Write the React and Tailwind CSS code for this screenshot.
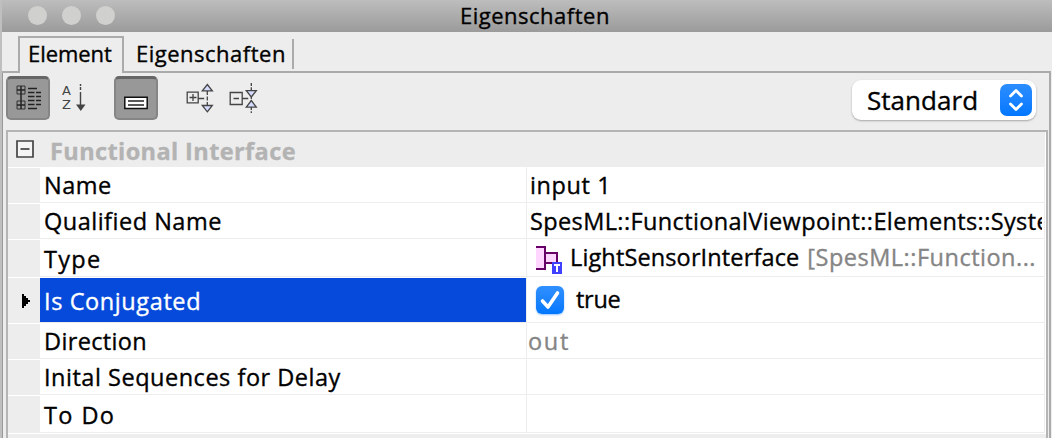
import React from "react";

const rows = [
  { name: "Name", h: "h-[36px]", pad: "pt-[5px]", track: "tracking-[0.5px]", value: "name" },
  { name: "Qualified Name", h: "h-[36px]", pad: "pt-[5px]", track: "tracking-[0.5px]", value: "qualified" },
  { name: "Type", h: "h-[38px]", pad: "pt-[7px]", track: "tracking-[1.3px]", value: "type" },
  { name: "Is Conjugated", h: "h-[46px]", pad: "pt-[11px]", track: "tracking-[0.6px]", value: "conjugated", selected: true },
  { name: "Direction", h: "h-[36px]", pad: "pt-[5px]", track: "tracking-[0.35px]", value: "direction" },
  { name: "Inital Sequences for Delay", h: "h-[36px]", pad: "pt-[5px]", track: "tracking-[0.52px]" },
  { name: "To Do", h: "h-[38px]", pad: "pt-[7px]", track: "tracking-[1.4px]" },
];

function TypeIcon() {
  return (
    <svg className="block h-[30px] w-[28px] shrink-0" viewBox="536 245 28 30">
      <path d="M536 247h9v22h-9z" fill="#ffd6ff" />
      <path d="M546 253h11v10h-11z" fill="#ffd6ff" />
      <path d="M536 247h9v22h-9M545 253h12v10h-12" fill="none" stroke="#660066" strokeWidth="2" />
      <path d="M552 262h10v12h-10z" fill="#4040ff" />
      <path d="M554 265h6M557 265v7" stroke="#fff" strokeWidth="2" fill="none" />
    </svg>
  );
}

function Value({ kind }) {
  if (kind === "name") return <div className="pl-[3px] pt-[5px] tracking-[0.6px]">input 1</div>;
  if (kind === "qualified")
    return <div className="w-[515px] overflow-hidden pl-[3px] pt-[5px] pb-1 tracking-[0.38px]">SpesML::FunctionalViewpoint::Elements::System</div>;
  if (kind === "type")
    return (
      <div className="flex pl-[9px] pt-[5px]">
        <TypeIcon />
        <span className="ml-[6px] tracking-[0.13px]">LightSensorInterface</span>
        <span className="ml-[8px] tracking-[0.5px] text-[#858585]">[SpesML::Function...</span>
      </div>
    );
  if (kind === "conjugated")
    return (
      <div className="flex pl-[9px] pt-[8px]">
        <span className="flex h-7 w-7 items-center justify-center rounded-[6px] bg-linear-to-b from-[#2f90ff] to-[#0077ff] shadow-[0_1px_2px_rgba(0,110,255,0.4)]">
          <svg className="h-7 w-7" viewBox="0 0 28 28">
            <path d="M6.5 15l5.5 6L21.5 7" fill="none" stroke="#fff" strokeWidth="3.6" strokeLinecap="round" strokeLinejoin="round" />
          </svg>
        </span>
        <span className="ml-[12px] pt-px tracking-[-0.3px]">true</span>
      </div>
    );
  if (kind === "direction") return <div className="pl-px pt-[5px] tracking-[1.7px] text-[#858585]">out</div>;
  return null;
}

function Row({ row }) {
  return (
    <div className={`flex shrink-0 ${row.h}`}>
      <div className="flex w-8 items-center border-t border-white bg-[#ededed] pl-[14px]">
        {row.selected && (
          <svg className="h-[14px] w-[8px]" viewBox="0 0 8 14">
            <path d="M0 0h2v2h2v2h2v2h2v2H6v2H4v2H2v2H0z" fill="#000" />
          </svg>
        )}
      </div>
      <div className="flex w-[486px] border-b border-t border-b-[#ededed] border-t-white bg-white">
        <div className={`w-full whitespace-nowrap pl-[4px] ${row.pad} ${row.track} ${row.selected ? "bg-[#064adb] text-white" : ""}`}>{row.name}</div>
      </div>
      <div className="w-[519px] whitespace-nowrap border-b border-l border-r border-t border-[#ededed] border-t-white bg-white">
        <Value kind={row.value} />
      </div>
      <div className="w-px bg-white" />
    </div>
  );
}

function ToolButton({ children }) {
  return (
    <div className="h-11 w-11 rounded-[5px] border-2 border-t-[3px] border-[#858585] border-t-[#666666] bg-[#989898]">
      <div className="-ml-[2px] -mt-[3px]">{children}</div>
    </div>
  );
}

function Toolbar() {
  return (
    <div className="flex h-[57px] shrink-0 pl-1 pt-[3px]">
      <ToolButton>
        <svg className="h-11 w-11" viewBox="6 76 44 44" fill="none" stroke="#222">
          <path d="M17 86h8v8h-8zM17 101h8v8h-8z" stroke="#333" />
          <path d="M21 86v23M17 90h8M17 105h8" strokeWidth="1.5" />
          <path d="M28 88.5h9M28 92.5h6.5m1.5 0h5M28 96.5h6.5m1.5 0h5M28 100.5h6.5m1.5 0h5M28 104.5h6.5m1.5 0h5M28 108.5h9" strokeWidth="1.3" />
        </svg>
      </ToolButton>
      <div className="ml-[12px] flex h-11 w-[26px] pt-[8px] font-['DejaVu_Sans'] text-[13px] leading-[14px] text-[#444] [-webkit-text-stroke:0px]">
        <div className="w-[12px]">
          <div>A</div>
          <div>Z</div>
        </div>
        <svg className="-mt-[8px] h-11 w-[14px]" viewBox="74 76 14 44">
          <path d="M80.5 84v2m0 1v3m0 2v14" stroke="#444" strokeWidth="1.4" />
          <path d="M76 104.5h9.5l-4.7 6.5z" fill="#444" />
        </svg>
      </div>
      <div className="ml-[26px]">
        <ToolButton>
          <svg className="h-11 w-11" viewBox="114 76 44 44">
            <path d="M124.8 97.2h22.4v11.3h-22.4z" fill="#fff" stroke="#111" strokeWidth="1.5" />
            <path d="M128 101h16M128 105h16" stroke="#222" strokeWidth="1.4" />
          </svg>
        </ToolButton>
      </div>
      <svg className="ml-[26px] h-11 w-8" viewBox="184 76 32 44" fill="none" stroke="#444" strokeWidth="1.3">
        <path d="M187.2 92.2h11v10.6h-11zM189.5 97.5h7M193 94v7M198.2 98.5h6" />
        <path d="M207.3 91v14" strokeDasharray="4 1.5" />
        <path d="M207.3 84.5l5 6.3h-10zM207.3 111.8l5-6.3h-10z" fill="#d5dcff" />
      </svg>
      <svg className="ml-[12px] h-11 w-8" viewBox="228 76 32 44" fill="none" stroke="#444" strokeWidth="1.3">
        <path d="M230.2 92.5h12v12h-12zM233.5 98.5h5.5M242.2 98.5h6" />
        <path d="M251.3 83v7M251.3 107v6M251.3 96v5" strokeDasharray="3 1.3" />
        <path d="M251.3 97l5-6.3h-10zM251.3 100.5l5 6.6h-10z" fill="#d5dcff" />
      </svg>
      <div className="ml-auto mr-[13px] mt-1 flex h-10 w-[184px] justify-between rounded-[9px] bg-white p-1 pl-[15px] shadow-[0_1px_2px_rgba(0,0,0,0.3)]">
        <span className="pt-[3px] text-[26px] leading-[26px] tracking-[0.05px]">Standard</span>
        <svg className="h-8 w-8 rounded-[7px] bg-linear-to-b from-[#2b8eff] to-[#0077ff]" viewBox="0 0 32 32">
          <path d="M10.5 12l5.5-5.5 5.5 5.5M10.5 20l5.5 5.5 5.5-5.5" fill="none" stroke="#fff" strokeWidth="2.8" strokeLinecap="round" strokeLinejoin="round" />
        </svg>
      </div>
    </div>
  );
}

export default function App() {
  return (
    <div className="flex h-[438px] w-[1052px] flex-col overflow-hidden bg-[#ededed] font-['Open_Sans',sans-serif] text-[23.5px] leading-[24px] text-black [-webkit-text-stroke:0.35px] [font-kerning:none] [font-variant-ligatures:none]">
      <header className="flex h-8 shrink-0 border-l-2 border-[#bfbfbf] bg-linear-to-b from-[#bdbdbd] to-[#9b9b9b]">
        <div className="flex w-[458px] gap-[15px] pl-[26px] pt-[6px]">
          <i className="h-[19px] w-[19px] rounded-full bg-[#d0d0ce]" />
          <i className="h-[19px] w-[19px] rounded-full bg-[#d0d0ce]" />
          <i className="h-[19px] w-[19px] rounded-full bg-[#d0d0ce]" />
        </div>
        <h1 className="pt-[3px] text-[22px] tracking-[0.5px]">Eigenschaften</h1>
      </header>
      <div className="flex min-h-0 grow border-l-2 border-[#bfbfbf] pr-px">
        <div className="flex w-[1049px] flex-col">
          <nav className="flex h-[41px] shrink-0 text-[22px]">
            <div className="w-4 border-b-2 border-[#ababab]" />
            <div className="mt-[4px] w-[106px] border-l-2 border-r-2 border-t-2 border-[#ababab] pl-[8px] pt-[3px] tracking-[-0.05px]">Element</div>
            <div className="w-[170px] border-b-2 border-[#ababab] pt-[7px]">
              <div className="flex h-[30px] border-r-2 border-[#ababab] pl-[12px] pt-[2px] tracking-[0.5px]">Eigenschaften</div>
            </div>
            <div className="grow border-b-2 border-[#ababab]" />
          </nav>
          <div className="flex grow flex-col border-l border-r-2 border-l-[#999] border-r-[#ababab] pl-0">
            <div className="-ml-px flex flex-col">
              <Toolbar />
            </div>
            <main className="ml-[3px] flex h-[308px] w-[1042px] flex-col border-l-2 border-r-2 border-t-2 border-[#b5b5b5]">
              <div className="flex h-[35px] shrink-0 border-r border-white pl-2 pt-2">
                <svg className="h-[18px] w-[18px]" viewBox="0 0 18 18">
                  <path d="M1 1h16v16H1z" fill="#f5f5f5" stroke="#444" strokeWidth="1.7" />
                  <path d="M4.5 9h9" stroke="#444" strokeWidth="1.7" />
                </svg>
                <h2 className="ml-[16px] -mt-px font-bold tracking-[0.4px] text-[#b3b3b3]">Functional Interface</h2>
              </div>
              {rows.map((row) => (
                <Row key={row.name} row={row} />
              ))}
              <div className="h-px bg-white" />
            </main>
          </div>
        </div>
      </div>
    </div>
  );
}
